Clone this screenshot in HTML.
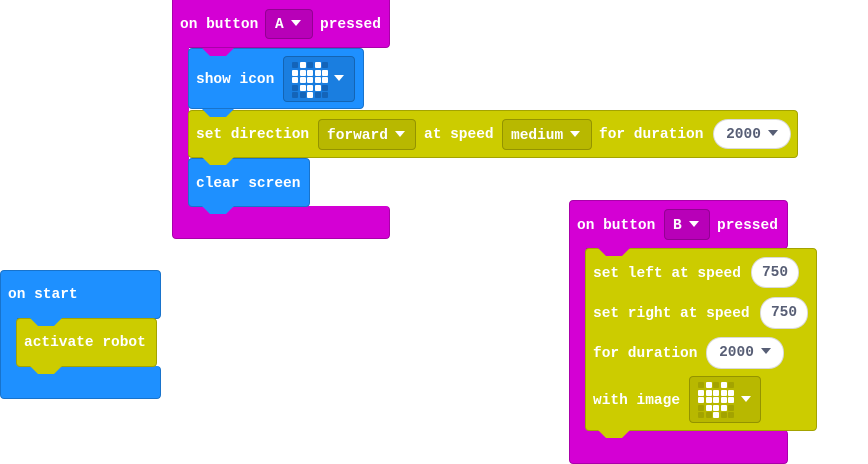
<!DOCTYPE html>
<html><head><style>
body{margin:0;width:868px;height:463px;background:#fff;position:relative;overflow:hidden;font-family:"Liberation Mono",monospace;font-weight:bold;font-size:14.5px;color:#fff}
div{position:absolute;box-sizing:border-box}
.m{background:#D400D4;border:1px solid #A900A9}
.b{background:#1E90FF;border:1px solid #1873CC}
.y{background:#CCCC00;border:1px solid #A3A300}
.t{white-space:nowrap;line-height:16px}
.dd{border-radius:4px;border:1px solid rgba(0,0,0,.2)}
.num{background:#fff;border-radius:15px;color:#575E75;text-align:center;border:1px solid rgba(0,0,0,.15);line-height:30px}
.tri{display:inline-block;width:0;height:0;border-left:5px solid transparent;border-right:5px solid transparent;border-top:6px solid currentColor;vertical-align:2px;margin-left:7px}
.tab{clip-path:polygon(0 0,100% 0,75% 100%,25% 100%);height:8px;width:32px}
.g{display:grid;grid-template-columns:repeat(5,6px);grid-auto-rows:6px;gap:1.5px}
.g span{width:6px;height:6px;border-radius:1px}
</style></head><body>

<!-- Block A -->
<div class="m" style="left:172px;top:-6px;width:218px;height:54px;border-radius:4px"></div>
<div class="m" style="left:172px;top:40px;width:17px;height:180px;border-right:none;border-top:none;border-bottom:none"></div>
<div class="m" style="left:172px;top:206px;width:218px;height:33px;border-radius:0 4px 4px 4px;border-top:none"></div>
<div class="t" style="left:180px;top:17px">on button</div>
<div class="dd" style="left:265px;top:9px;width:48px;height:30px;background:#B800B8;padding:7px 0 0 9px"><span class="t">A</span><span class="tri"></span></div>
<div class="t" style="left:320px;top:17px">pressed</div>

<div class="b" style="left:188px;top:48px;width:176px;height:61px;border-radius:4px"></div>
<div class="tab" style="left:202px;top:48px;background:#D400D4"></div>
<div class="t" style="left:196px;top:72px">show icon</div>
<div class="dd" style="left:283px;top:56px;width:72px;height:46px;background:#1A7EE0;"></div>
<div class="g" style="left:292px;top:62px">
<span style="background:#1464B8"></span><span style="background:#fff"></span><span style="background:#1464B8"></span><span style="background:#fff"></span><span style="background:#1464B8"></span>
<span style="background:#fff"></span><span style="background:#fff"></span><span style="background:#fff"></span><span style="background:#fff"></span><span style="background:#fff"></span>
<span style="background:#fff"></span><span style="background:#fff"></span><span style="background:#fff"></span><span style="background:#fff"></span><span style="background:#fff"></span>
<span style="background:#1464B8"></span><span style="background:#fff"></span><span style="background:#fff"></span><span style="background:#fff"></span><span style="background:#1464B8"></span>
<span style="background:#1464B8"></span><span style="background:#1464B8"></span><span style="background:#fff"></span><span style="background:#1464B8"></span><span style="background:#1464B8"></span>
</div>
<div class="t" style="left:334px;top:72px"><span class="tri" style="margin:0"></span></div>

<div class="y" style="left:188px;top:110px;width:610px;height:48px;border-radius:4px"></div>
<div class="tab" style="left:202px;top:109px;background:#1E90FF"></div>
<div class="t" style="left:196px;top:127px">set direction</div>
<div class="dd" style="left:318px;top:119px;width:98px;height:31px;background:#B8B800;padding:8px 0 0 8px"><span class="t">forward</span><span class="tri"></span></div>
<div class="t" style="left:424px;top:127px">at speed</div>
<div class="dd" style="left:502px;top:119px;width:90px;height:31px;background:#B8B800;padding:8px 0 0 8px"><span class="t">medium</span><span class="tri"></span></div>
<div class="t" style="left:599px;top:127px">for duration</div>
<div class="num" style="left:713px;top:119px;width:78px;height:30px">2000<span class="tri"></span></div>

<div class="b" style="left:188px;top:158px;width:122px;height:49px;border-radius:4px"></div>
<div class="tab" style="left:202px;top:157px;background:#CCCC00"></div>
<div class="t" style="left:196px;top:176px">clear screen</div>
<div class="tab" style="left:202px;top:206px;background:#1E90FF"></div>

<!-- Block B -->
<div class="m" style="left:569px;top:200px;width:219px;height:49px;border-radius:4px"></div>
<div class="m" style="left:569px;top:240px;width:17px;height:200px;border-right:none;border-top:none;border-bottom:none"></div>
<div class="m" style="left:569px;top:430px;width:219px;height:34px;border-radius:0 4px 4px 4px;border-top:none"></div>
<div class="t" style="left:577px;top:218px">on button</div>
<div class="dd" style="left:664px;top:209px;width:46px;height:31px;background:#B800B8;padding:8px 0 0 8px"><span class="t">B</span><span class="tri"></span></div>
<div class="t" style="left:717px;top:218px">pressed</div>

<div class="y" style="left:585px;top:248px;width:232px;height:183px;border-radius:4px"></div>
<div class="tab" style="left:598px;top:248px;background:#D400D4"></div>
<div class="t" style="left:593px;top:266px">set left at speed</div>
<div class="num" style="left:751px;top:257px;width:48px;height:31px">750</div>
<div class="t" style="left:593px;top:306px">set right at speed</div>
<div class="num" style="left:760px;top:297px;width:48px;height:32px">750</div>
<div class="t" style="left:593px;top:346px">for duration</div>
<div class="num" style="left:706px;top:337px;width:78px;height:32px">2000<span class="tri"></span></div>
<div class="t" style="left:593px;top:393px">with image</div>
<div class="dd" style="left:689px;top:376px;width:72px;height:47px;background:#B8B800"></div>
<div class="g" style="left:698px;top:382px">
<span style="background:#A3A300"></span><span style="background:#fff"></span><span style="background:#A3A300"></span><span style="background:#fff"></span><span style="background:#A3A300"></span>
<span style="background:#fff"></span><span style="background:#fff"></span><span style="background:#fff"></span><span style="background:#fff"></span><span style="background:#fff"></span>
<span style="background:#fff"></span><span style="background:#fff"></span><span style="background:#fff"></span><span style="background:#fff"></span><span style="background:#fff"></span>
<span style="background:#A3A300"></span><span style="background:#fff"></span><span style="background:#fff"></span><span style="background:#fff"></span><span style="background:#A3A300"></span>
<span style="background:#A3A300"></span><span style="background:#A3A300"></span><span style="background:#fff"></span><span style="background:#A3A300"></span><span style="background:#A3A300"></span>
</div>
<div class="t" style="left:741px;top:393px"><span class="tri" style="margin:0"></span></div>
<div class="tab" style="left:598px;top:430px;background:#CCCC00"></div>

<!-- On start -->
<div class="b" style="left:0;top:270px;width:161px;height:49px;border-radius:4px"></div>
<div class="b" style="left:0;top:310px;width:17px;height:60px;border-right:none;border-top:none;border-bottom:none"></div>
<div class="b" style="left:0;top:366px;width:161px;height:33px;border-radius:0 4px 4px 4px;border-top:none"></div>
<div class="t" style="left:8px;top:287px">on start</div>
<div class="y" style="left:16px;top:318px;width:141px;height:49px;border-radius:4px"></div>
<div class="tab" style="left:30px;top:318px;background:#1E90FF"></div>
<div class="t" style="left:24px;top:335px">activate robot</div>
<div class="tab" style="left:30px;top:366px;background:#CCCC00"></div>

</body></html>
